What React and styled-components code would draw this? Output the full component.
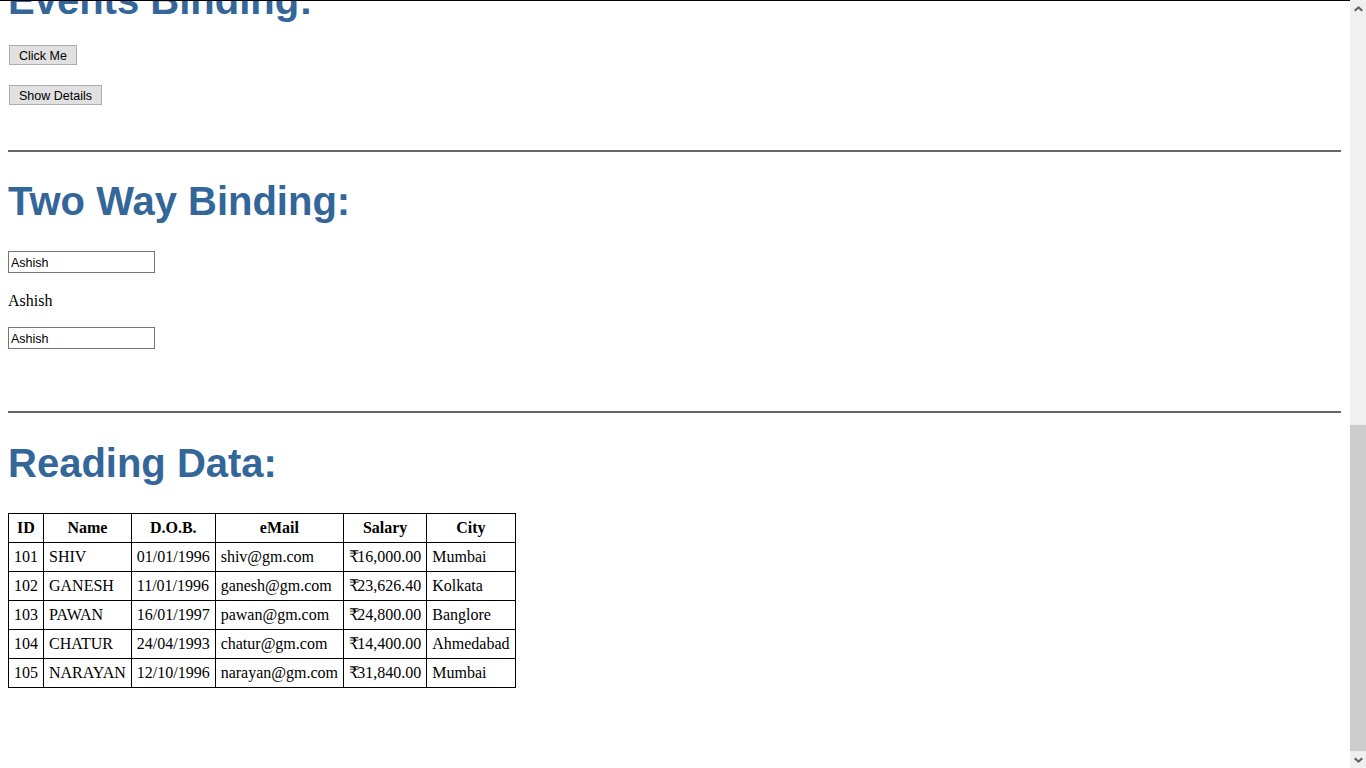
import React, { useState } from 'react';
import styled, { createGlobalStyle } from 'styled-components';

const employees = [
  { id: 101, name: 'SHIV', dob: '01/01/1996', email: 'shiv@gm.com', salary: '16,000.00', city: 'Mumbai' },
  { id: 102, name: 'GANESH', dob: '11/01/1996', email: 'ganesh@gm.com', salary: '23,626.40', city: 'Kolkata' },
  { id: 103, name: 'PAWAN', dob: '16/01/1997', email: 'pawan@gm.com', salary: '24,800.00', city: 'Banglore' },
  { id: 104, name: 'CHATUR', dob: '24/04/1993', email: 'chatur@gm.com', salary: '14,400.00', city: 'Ahmedabad' },
  { id: 105, name: 'NARAYAN', dob: '12/10/1996', email: 'narayan@gm.com', salary: '31,840.00', city: 'Mumbai' },
];

const App = () => {
  const [name, setName] = useState('Ashish');

  return (
    <Page>
      <GlobalStyle />
      <Main>
        <Heading $top={-25}>Events Binding:</Heading>
        <ButtonStack>
          <Button>Click Me</Button>
          <Button>Show Details</Button>
        </ButtonStack>

        <Divider $top={45} />

        <Heading $top={25}>Two Way Binding:</Heading>
        <Field $top={26} value={name} onChange={(e) => setName(e.target.value)} />
        <Echo>{name}</Echo>
        <Field $top={17} value={name} onChange={(e) => setName(e.target.value)} />

        <Divider $top={62} />

        <Heading $top={26}>Reading Data:</Heading>
        <Table>
          <thead>
            <tr>
              <Th>ID</Th>
              <Th>Name</Th>
              <Th>D.O.B.</Th>
              <Th>eMail</Th>
              <Th>Salary</Th>
              <Th>City</Th>
            </tr>
          </thead>
          <tbody>
            {employees.map((emp) => (
              <tr key={emp.id}>
                <Td>{emp.id}</Td>
                <Td>{emp.name}</Td>
                <Td>{emp.dob}</Td>
                <Td>{emp.email}</Td>
                <Td>
                  <Rupee>₹</Rupee>
                  {emp.salary}
                </Td>
                <Td>{emp.city}</Td>
              </tr>
            ))}
          </tbody>
        </Table>
      </Main>

      <Scrollbar>
        <Arrow>
          <svg width="9" height="6" viewBox="0 0 9 6">
            <polygon points="0,4 4.5,0 9,4 7.5,5.5 4.5,2.7 1.5,5.5" fill="#606060" />
          </svg>
        </Arrow>
        <Track>
          <Thumb />
        </Track>
        <Arrow>
          <svg width="9" height="6" viewBox="0 0 9 6">
            <polygon points="0,2 4.5,6 9,2 7.5,0.5 4.5,3.3 1.5,0.5" fill="#606060" />
          </svg>
        </Arrow>
      </Scrollbar>
    </Page>
  );
};

const GlobalStyle = createGlobalStyle`
  html, body {
    margin: 0;
    padding: 0;
    background: #ffffff;
  }
  body {
    font-family: "Liberation Serif", "Times New Roman", serif;
  }
`;

const Page = styled.div`
  display: flex;
  width: 100vw;
  height: 100vh;
  overflow: hidden;
  background: #ffffff;
`;

const Main = styled.div`
  flex: 1;
  min-width: 0;
  height: 100%;
  box-sizing: border-box;
  border-top: 1px solid #000000;
  padding: 0 9px 0 8px;
  overflow: hidden;
`;

const Heading = styled.h1`
  margin: ${(p) => p.$top}px 0 0 0;
  font-family: "Liberation Sans", Arial, sans-serif;
  font-size: 40px;
  font-weight: bold;
  line-height: 48px;
  color: #336699;
  white-space: nowrap;
`;

const ButtonStack = styled.div`
  margin-top: 21px;
  display: flex;
  flex-direction: column;
  align-items: flex-start;
  gap: 20px;
`;

const Button = styled.button`
  height: 20px;
  box-sizing: border-box;
  padding: 2px 9px 0;
  margin: 0 0 0 1px;
  border: 1px solid #adadad;
  border-radius: 0;
  background: #e1e1e1;
  color: #000000;
  font-family: "Liberation Sans", Arial, sans-serif;
  font-size: 12.5px;
  line-height: 15px;
`;

const Divider = styled.div`
  margin-top: ${(p) => p.$top}px;
  height: 0;
  border-top: 2px solid #666666;
`;

const Field = styled.input`
  display: block;
  margin: ${(p) => p.$top}px 0 0 0;
  width: 147px;
  height: 22px;
  box-sizing: border-box;
  padding: 2px 2px 0;
  border: 1px solid #767676;
  border-radius: 0;
  outline: none;
  font-family: "Liberation Sans", Arial, sans-serif;
  font-size: 12.5px;
  color: #000000;
  background: #ffffff;
`;

const Echo = styled.p`
  margin: 19px 0 0 0;
  font-family: "Liberation Serif", "Times New Roman", serif;
  font-size: 16px;
  line-height: 18px;
  color: #000000;
`;

const Table = styled.table`
  margin-top: 26px;
  border-collapse: collapse;
  border: 1px solid #000000;
  font-family: "Liberation Serif", "Times New Roman", "DejaVu Serif", serif;
  font-size: 16px;
  line-height: 18px;
  color: #000000;
`;

const Th = styled.th`
  border: 1px solid #000000;
  padding: 5px;
  font-weight: bold;
  text-align: center;
  white-space: nowrap;
`;

const Td = styled.td`
  border: 1px solid #000000;
  padding: 5px;
  text-align: left;
  white-space: nowrap;
`;

const Rupee = styled.span`
  letter-spacing: -2px;
`;

const Scrollbar = styled.div`
  width: 16px;
  flex: none;
  display: flex;
  flex-direction: column;
  background: #f0f0f0;
`;

const Arrow = styled.div`
  height: 17px;
  flex: none;
  display: flex;
  align-items: center;
  justify-content: center;
`;

const Track = styled.div`
  flex: 1;
  display: flex;
  flex-direction: column;
  justify-content: flex-end;
`;

const Thumb = styled.div`
  height: 326px;
  background: #cdcdcd;
`;

export default App;
